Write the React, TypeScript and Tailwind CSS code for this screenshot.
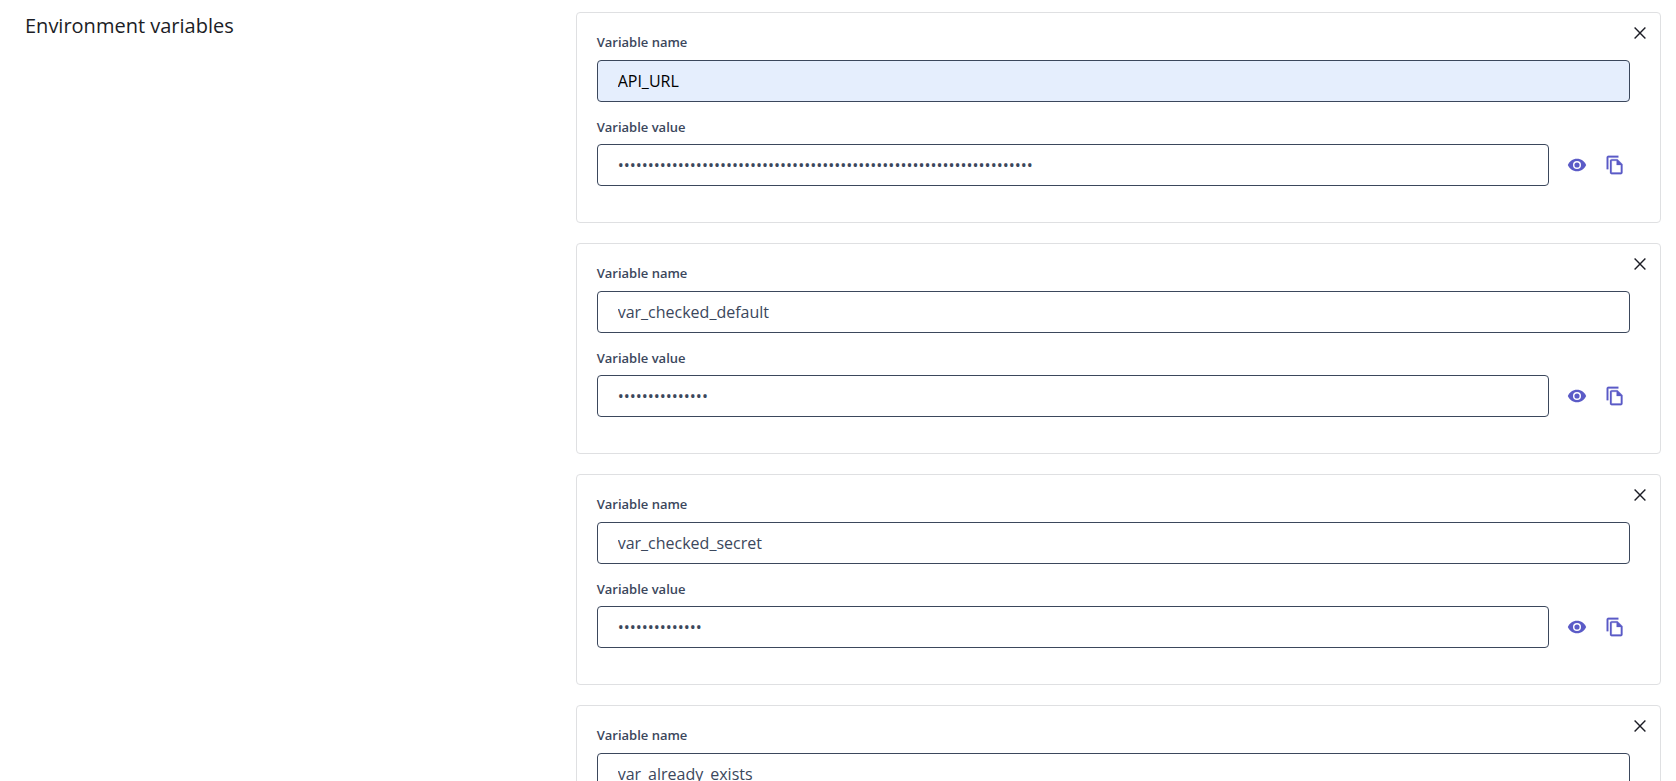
import { useState } from 'react'
import { MdVisibilityOff } from 'react-icons/md'

type Variable = {
  id: number
  name: string
  value: string
  autofilled?: boolean
}

const initialVariables: Variable[] = [
  { id: 1, name: 'API_URL', value: 'x'.repeat(69), autofilled: true },
  { id: 2, name: 'var_checked_default', value: 'default_value_1' },
  { id: 3, name: 'var_checked_secret', value: 'secret_value_1' },
  { id: 4, name: 'var_already_exists', value: 'existing_value' },
]

const labelClass = 'block text-[13px] leading-[18px] font-semibold text-[#3b475c]'
const inputClass =
  'h-[42px] w-full min-w-0 rounded border border-[#3b475c] px-5 text-base outline-none focus:border-[#5b5bc7]'
const iconButtonClass =
  'flex size-[30px] shrink-0 cursor-pointer items-center justify-center text-[#5b5bc7]'

function IconClose() {
  return (
    <svg width="20" height="20" viewBox="0 0 20 20" fill="none" stroke="currentColor" strokeWidth="1.4">
      <path d="M4.6 4.6 15.4 15.4M15.4 4.6 4.6 15.4" />
    </svg>
  )
}

function IconEye() {
  return (
    <svg width="20" height="20" viewBox="0 0 24 24" fill="currentColor">
      <path d="M12 4.5C7 4.5 2.73 7.61 1 12c1.73 4.39 6 7.5 11 7.5s9.27-3.11 11-7.5c-1.73-4.39-6-7.5-11-7.5z" />
      <circle cx="12" cy="12" r="4.8" fill="#fff" />
      <circle cx="12" cy="12" r="3.1" />
    </svg>
  )
}

function IconCopy() {
  return (
    <svg
      width="20"
      height="20"
      viewBox="0 0 24 24"
      fill="currentColor"
      stroke="currentColor"
      strokeWidth="0.3"
      strokeLinejoin="round"
    >
      <path d="M16 1H4c-1.1 0-2 .9-2 2v14h2V3h12V1zm-1 4H8c-1.1 0-1.99.9-1.99 2L6 21c0 1.1.89 2 1.99 2H19c1.1 0 2-.9 2-2V11l-6-6zM8 21V7h6v5h5v9H8z" />
    </svg>
  )
}

function VariableCard({
  variable,
  onChange,
  onRemove,
}: {
  variable: Variable
  onChange: (variable: Variable) => void
  onRemove: () => void
}) {
  const [visible, setVisible] = useState(false)
  const nameId = `variable-name-${variable.id}`
  const valueId = `variable-value-${variable.id}`

  return (
    <li className="flex items-start rounded border border-[#dfe0e2] pr-[10px] pl-5">
      <div className="min-w-0 flex-1 pt-5 pb-9">
        <label htmlFor={nameId} className={`${labelClass} mb-[9px]`}>
          Variable name
        </label>
        <input
          id={nameId}
          type="text"
          value={variable.name}
          onChange={(e) => onChange({ ...variable, name: e.target.value })}
          className={`${inputClass} mb-4 block ${variable.autofilled ? 'bg-[#e5eefd] text-black' : 'bg-white text-[#3b475c]'}`}
        />
        <label htmlFor={valueId} className={`${labelClass} mb-2`}>
          Variable value
        </label>
        <div className="flex items-center gap-2">
          <input
            id={valueId}
            type={visible ? 'text' : 'password'}
            autoComplete="off"
            value={variable.value}
            onChange={(e) => onChange({ ...variable, value: e.target.value })}
            className={`${inputClass} mr-[5px] flex-1 bg-white text-[#3b475c]`}
          />
          <button
            type="button"
            aria-label={visible ? 'Hide value' : 'Show value'}
            onClick={() => setVisible(!visible)}
            className={iconButtonClass}
          >
            {visible ? <MdVisibilityOff size={20} /> : <IconEye />}
          </button>
          <button
            type="button"
            aria-label="Copy value"
            onClick={() => navigator.clipboard?.writeText(variable.value)}
            className={iconButtonClass}
          >
            <IconCopy />
          </button>
        </div>
      </div>
      <button
        type="button"
        aria-label="Remove variable"
        onClick={onRemove}
        className="mt-[10px] shrink-0 cursor-pointer text-[#1c1d26]"
      >
        <IconClose />
      </button>
    </li>
  )
}

export default function App() {
  const [variables, setVariables] = useState<Variable[]>(initialVariables)

  return (
    <main className="grid grid-cols-3 gap-x-4 bg-white py-3 pr-[15px] pl-[25px] font-['Open_Sans',sans-serif]">
      <h2 className="text-xl leading-7 text-[#1c1d26]">Environment variables</h2>
      <ul className="col-span-2 flex flex-col gap-5">
        {variables.map((variable) => (
          <VariableCard
            key={variable.id}
            variable={variable}
            onChange={(next) =>
              setVariables(variables.map((item) => (item.id === next.id ? next : item)))
            }
            onRemove={() => setVariables(variables.filter((item) => item.id !== variable.id))}
          />
        ))}
      </ul>
    </main>
  )
}
